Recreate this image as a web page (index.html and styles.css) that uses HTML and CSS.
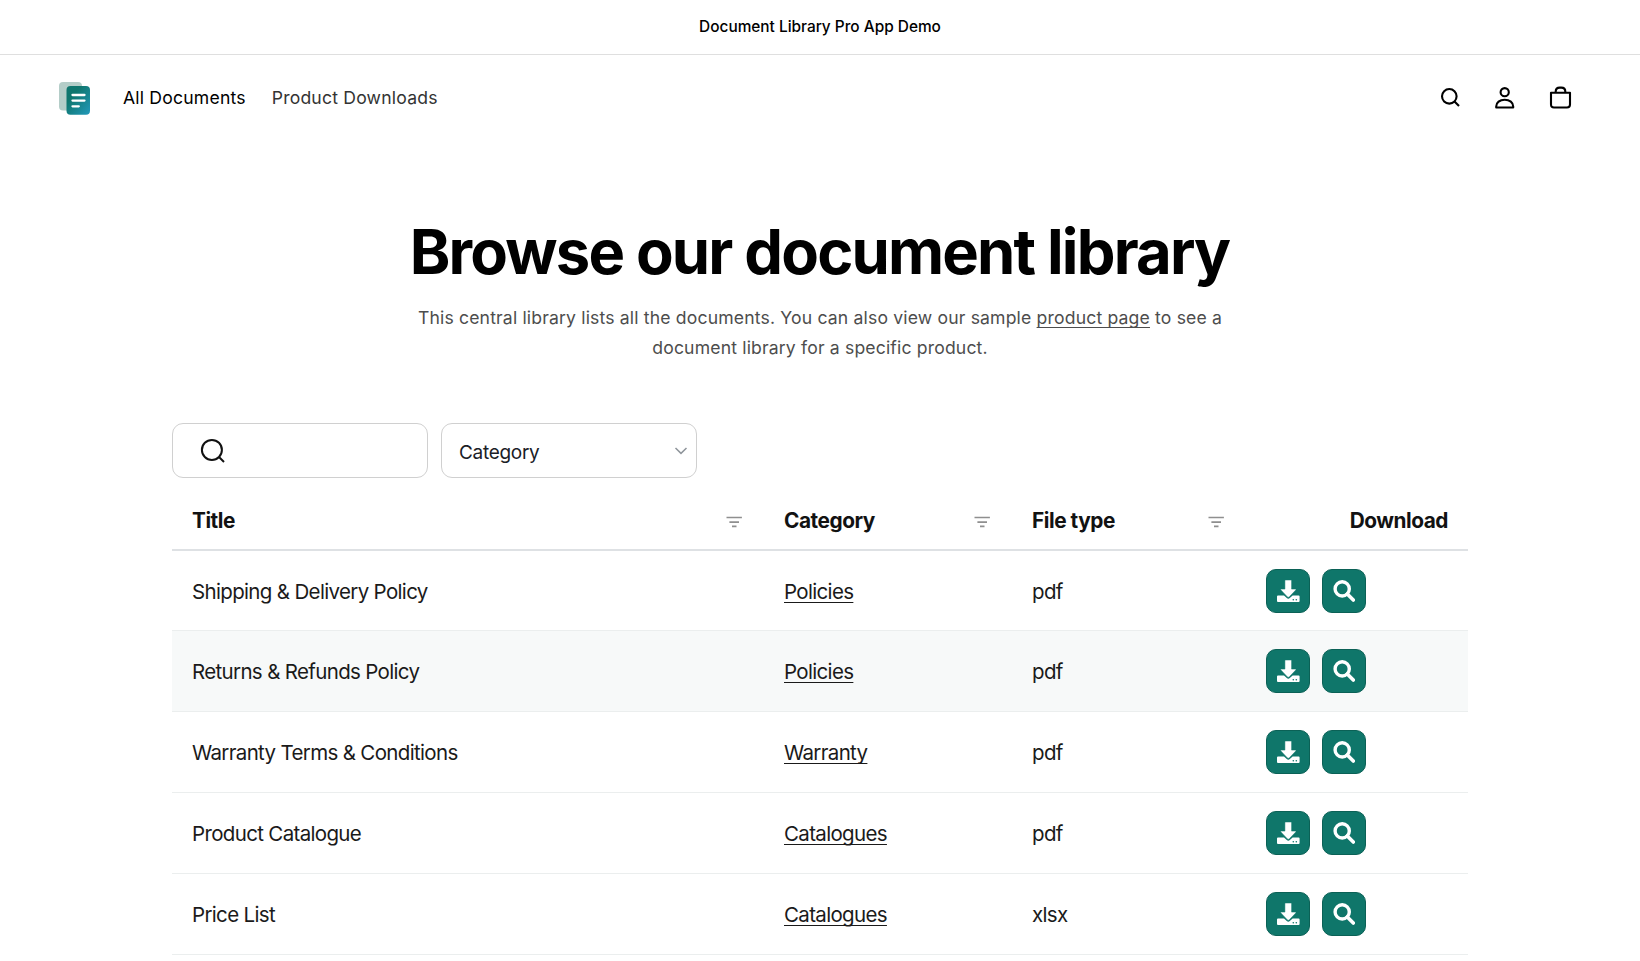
FILE: index.html
```
<!DOCTYPE html>
<html lang="en">
<head>
    <meta charset="UTF-8">
    <meta name="viewport" content="width=device-width, initial-scale=1.0">
    <title>Document Library Pro App Demo</title>
    <link rel="stylesheet" href="styles.css">
</head>
<body>

<!-- Shared icons -->
<svg class="sprite" aria-hidden="true">
    <symbol id="icon-sort" viewBox="0 0 20 14">
        <path d="M2.5 2.5h15.4M5.4 7.1h9.6M8 11.4h4.5" fill="none" stroke="#8f8f8f" stroke-width="1.6"/>
    </symbol>
    <symbol id="icon-download" viewBox="0 0 23 22">
        <path d="M1 15.400h6l2.800 2.700q1.500 1.200 3 0l2.800-2.700h6q1 0 1 1v4.600q0 1-1 1H1q-1 0-1-1v-4.600q0-1 1-1z" fill="#fff"/>
        <path d="M8.500 0h5.500q.6 0 .6.6v8.500h3.900q1 0 .3.900l-6.600 6.900q-.9.800-1.800 0L3.900 10q-.7-.9.300-.9h3.700V.6q0-.6.6-.6z" fill="#fff" stroke="#0f766a" stroke-width=".5"/>
        <circle cx="16.300" cy="19.700" r=".8" fill="#0f766a"/>
        <circle cx="19.300" cy="19.700" r=".8" fill="#0f766a"/>
    </symbol>
    <symbol id="icon-preview" viewBox="0 0 22 22">
        <circle cx="9.200" cy="8.900" r="7.100" fill="none" stroke="#fff" stroke-width="3.400"/>
        <path d="M14.300 14l6 6" fill="none" stroke="#fff" stroke-width="3.600" stroke-linecap="round"/>
    </symbol>
</svg>

<div class="announcement">Document Library Pro App Demo</div>

<header class="header">
    <a class="logo" href="#">
        <svg width="33" height="34" viewBox="0 0 33 34">
            <defs>
                <linearGradient id="logoFill" x1="0" y1="0" x2="1" y2="1">
                    <stop offset="0.3" stop-color="#0f766e"/>
                    <stop offset="1" stop-color="#2299bb"/>
                </linearGradient>
            </defs>
            <rect x="1" y="1" width="23" height="28.500" rx="4" fill="#b4cdc8"/>
            <rect x="8.500" y="5" width="23.500" height="28.700" rx="4" fill="url(#logoFill)"/>
            <path d="M14.500 14h12M14.500 19.600h12M14.500 25.300h6.300" fill="none" stroke="#fff" stroke-width="2.300" stroke-linecap="round"/>
        </svg>
    </a>
    <nav class="menu">
        <a class="active" href="#">All Documents</a>
        <a href="#">Product Downloads</a>
    </nav>
    <div class="actions">
        <a href="#" aria-label="Search">
            <svg width="24" height="24" viewBox="0 0 24 24">
                <circle cx="11.300" cy="10.300" r="7.300"/>
                <path d="M16.500 15.500l4.500 4.500"/>
            </svg>
        </a>
        <a href="#" aria-label="Account">
            <svg width="24" height="24" viewBox="0 0 24 24">
                <circle cx="10.700" cy="6.200" r="4.100"/>
                <path d="M2.200 21.500v-.9c0-4 3.500-6.900 8.500-6.900s8.500 2.900 8.500 6.900v.9z" stroke-linejoin="round"/>
            </svg>
        </a>
        <a href="#" aria-label="Cart">
            <svg width="24" height="24" viewBox="0 0 24 24">
                <path d="M2 6.700h19v11.800q0 3-3 3h-13q-3 0-3-3z" stroke-linejoin="round"/>
                <path d="M6.700 6.700V5.600q0-4 4-4h1.600q4 0 4 4v1.100"/>
            </svg>
        </a>
    </div>
</header>

<main>
    <section class="hero">
        <h1>Browse our document library</h1>
        <p>This central library lists all the documents. You can also view our sample <a href="#">product page</a> to see a document library for a specific product.</p>
    </section>

    <section class="library">
        <div class="filters">
            <div class="filter search">
                <svg width="26" height="26" viewBox="0 0 26 26">
                    <circle cx="11.900" cy="11.900" r="10"/>
                    <path d="M19 19l5 5"/>
                </svg>
            </div>
            <div class="filter select">
                <span>Category</span>
                <svg width="14" height="8" viewBox="0 0 14 8">
                    <path d="M1.500 1l5.500 5.400L12.500 1"/>
                </svg>
            </div>
        </div>

        <table class="documents">
            <colgroup>
                <col class="col-title">
                <col class="col-category">
                <col class="col-type">
                <col class="col-download">
            </colgroup>
            <thead>
                <tr>
                    <th><div class="heading">Title <svg class="sort"><use href="#icon-sort"/></svg></div></th>
                    <th><div class="heading">Category <svg class="sort"><use href="#icon-sort"/></svg></div></th>
                    <th><div class="heading">File type <svg class="sort"><use href="#icon-sort"/></svg></div></th>
                    <th class="right">Download</th>
                </tr>
            </thead>
            <tbody>
                <tr>
                    <td>Shipping &amp; Delivery Policy</td>
                    <td><a href="#">Policies</a></td>
                    <td>pdf</td>
                    <td>
                        <div class="buttons">
                            <button aria-label="Download"><svg width="23" height="22"><use href="#icon-download"/></svg></button>
                            <button aria-label="Preview"><svg width="22" height="22"><use href="#icon-preview"/></svg></button>
                        </div>
                    </td>
                </tr>
                <tr class="highlight">
                    <td>Returns &amp; Refunds Policy</td>
                    <td><a href="#">Policies</a></td>
                    <td>pdf</td>
                    <td>
                        <div class="buttons">
                            <button aria-label="Download"><svg width="23" height="22"><use href="#icon-download"/></svg></button>
                            <button aria-label="Preview"><svg width="22" height="22"><use href="#icon-preview"/></svg></button>
                        </div>
                    </td>
                </tr>
                <tr>
                    <td>Warranty Terms &amp; Conditions</td>
                    <td><a href="#">Warranty</a></td>
                    <td>pdf</td>
                    <td>
                        <div class="buttons">
                            <button aria-label="Download"><svg width="23" height="22"><use href="#icon-download"/></svg></button>
                            <button aria-label="Preview"><svg width="22" height="22"><use href="#icon-preview"/></svg></button>
                        </div>
                    </td>
                </tr>
                <tr>
                    <td>Product Catalogue</td>
                    <td><a href="#">Catalogues</a></td>
                    <td>pdf</td>
                    <td>
                        <div class="buttons">
                            <button aria-label="Download"><svg width="23" height="22"><use href="#icon-download"/></svg></button>
                            <button aria-label="Preview"><svg width="22" height="22"><use href="#icon-preview"/></svg></button>
                        </div>
                    </td>
                </tr>
                <tr>
                    <td>Price List</td>
                    <td><a href="#">Catalogues</a></td>
                    <td>xlsx</td>
                    <td>
                        <div class="buttons">
                            <button aria-label="Download"><svg width="23" height="22"><use href="#icon-download"/></svg></button>
                            <button aria-label="Preview"><svg width="22" height="22"><use href="#icon-preview"/></svg></button>
                        </div>
                    </td>
                </tr>
            </tbody>
        </table>
    </section>
</main>

</body>
</html>
```
FILE: styles.css
```
* {
    box-sizing: border-box;
}

body {
    margin: 0;
    background: #fff;
    color: #000;
    font-family: Inter, sans-serif;
}

a {
    color: inherit;
}

svg {
    display: block;
}

.sprite {
    display: none;
}

.announcement {
    height: 55px;
    border-bottom: 1px solid #dfdfdf;
    line-height: 54px;
    text-align: center;
    font-size: 15.4px;
    font-weight: 500;
}

/* Header */
.header {
    display: flex;
    align-items: center;
    height: 86px;
    padding: 0 67px 0 58px;
}

.logo {
    margin-right: 32px;
}

.menu {
    display: flex;
    gap: 26px;
    padding-bottom: 2px;
    font-size: 17.6px;
    letter-spacing: 0.19px;
    color: #333;
}

.menu a {
    text-decoration: none;
}

.menu .active {
    color: #000;
}

.actions {
    display: flex;
    gap: 31.5px;
    margin-left: auto;
}

.actions svg {
    fill: none;
    stroke: #000;
    stroke-width: 2.1;
}

/* Hero */
.hero {
    padding-top: 73px;
    text-align: center;
}

.hero h1 {
    margin: 0;
    font-size: 61.5px;
    font-weight: 700;
    line-height: 76px;
    letter-spacing: -1.82px;
    text-indent: -1px;
}

.hero p {
    width: 820px;
    margin: 13px auto 0;
    font-size: 17.6px;
    line-height: 29.6px;
    letter-spacing: 0.16px;
    color: #4d4d4d;
}

.hero a {
    text-underline-offset: 3px;
    text-decoration-skip-ink: none;
}

/* Library */
.library {
    width: 1296px;
    margin: 61px auto 0;
}

.filters {
    display: flex;
    gap: 13px;
    margin-bottom: 15px;
}

.filter {
    display: flex;
    align-items: center;
    width: 256px;
    height: 55px;
    border: 1px solid #d0d0d0;
    border-radius: 11px;
}

.filter svg {
    fill: none;
    stroke: #111;
    stroke-width: 2;
}

.search {
    padding-left: 27px;
}

.select {
    justify-content: space-between;
    padding: 3px 8px 0 17px;
    font-size: 19px;
    letter-spacing: -0.3px;
    color: #1a2026;
}

.select svg {
    margin-top: -3px;
    stroke: #8f959b;
    stroke-width: 1.5;
}

.documents {
    width: 100%;
    table-layout: fixed;
    border-spacing: 0;
    font-size: 20.5px;
    letter-spacing: -0.66px;
    color: #1a1a1a;
}

.col-title {
    width: 592px;
}

.col-category {
    width: 248px;
}

.col-type {
    width: 234px;
}

.documents th {
    height: 58px;
    padding: 0 20px 1px;
    border-bottom: 2px solid #dee1e4;
    text-align: left;
    font-size: 20.8px;
    font-weight: 700;
    letter-spacing: -0.45px;
    color: #121212;
}

.documents th.right {
    text-align: right;
}

.heading {
    display: flex;
    align-items: center;
    justify-content: space-between;
}

.sort {
    width: 20px;
    height: 14px;
    margin-top: 2px;
}

.documents td {
    height: 81px;
    padding: 0 20px;
    border-bottom: 1px solid #ebeeee;
}

.documents tbody tr:first-child td {
    height: 80px;
    padding-top: 1px;
}

.documents .highlight {
    background: #f7f9f9;
}

.documents td a {
    text-decoration-thickness: 1px;
    text-underline-offset: 3px;
    text-decoration-skip-ink: none;
}

.buttons {
    display: flex;
    gap: 12px;
}

.buttons button {
    display: flex;
    align-items: center;
    justify-content: center;
    width: 44px;
    height: 44px;
    padding: 0;
    border: 1px solid #0b6156;
    border-radius: 10px;
    background: #0f766a;
}
```
